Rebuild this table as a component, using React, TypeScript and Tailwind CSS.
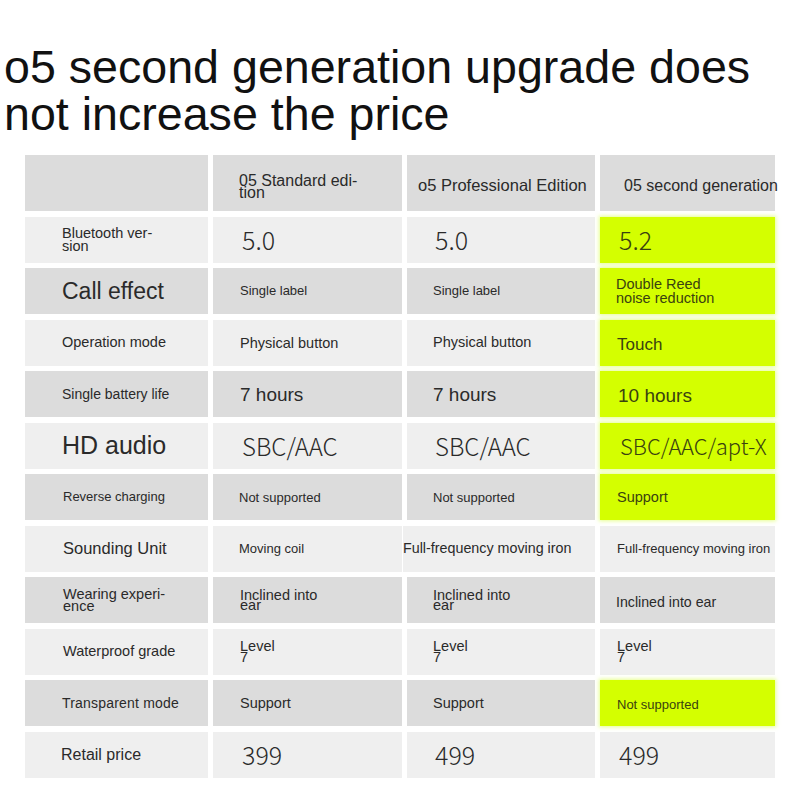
import React from "react";

type Tone = "d" | "l" | "g";

const tones: Record<Tone, string> = {
  d: "bg-[#dcdcdc] text-[#2a2a2a]",
  l: "bg-[#efefef] text-[#2a2a2a]",
  g: "bg-[#d4ff00] text-[#3a4210] shadow-[0_0_4px_1px_rgba(222,255,110,0.8)]",
};

const num = "[font-family:'Noto_Sans_CJK_SC','Noto_Sans',sans-serif] font-light";

const Cell = ({
  tone,
  className = "",
  children,
}: {
  tone: Tone;
  className?: string;
  children?: React.ReactNode;
}) => (
  <div className={`flex items-center whitespace-nowrap ${tones[tone]} ${className}`}>
    <div>{children}</div>
  </div>
);

const App = () => {
  return (
    <div className="w-[800px] h-[800px] bg-white overflow-hidden [font-family:'Liberation_Sans',Arial,sans-serif]">
      <h1 className="pt-[44px] pl-[4px] text-[46.6px] leading-[47px] font-normal text-[#111]">
        o5 second generation upgrade does
        <br />
        not increase the price
      </h1>

      <div className="mt-[17px] ml-[25px] grid grid-cols-[183px_189px_188px_175px] grid-rows-[56px_repeat(11,46px)] gap-x-[5px] gap-y-[5.5px]">
        {/* header */}
        <Cell tone="d" />
        <Cell tone="d" className="pl-[26px] text-[16px] leading-[12px] pt-[8px]">
          05 Standard edi-
          <br />
          tion
        </Cell>
        <Cell tone="d" className="pl-[11px] text-[16.5px] pt-[4px]">
          o5 Professional Edition
        </Cell>
        <Cell tone="d" className="pl-[24px] text-[16px] pt-[5px]">
          05 second generation
        </Cell>

        {/* Bluetooth */}
        <Cell tone="l" className="pl-[37px] text-[14.5px] leading-[12.5px]">
          Bluetooth ver-
          <br />
          sion
        </Cell>
        <Cell tone="l" className={`pl-[29px] text-[25px] ${num}`}>5.0</Cell>
        <Cell tone="l" className={`pl-[28px] text-[25px] ${num}`}>5.0</Cell>
        <Cell tone="g" className={`pl-[19px] text-[25px] ${num}`}>5.2</Cell>

        {/* Call effect */}
        <Cell tone="d" className="pl-[37px] text-[23px]">Call effect</Cell>
        <Cell tone="d" className="pl-[27px] text-[13px]">Single label</Cell>
        <Cell tone="d" className="pl-[26px] text-[13px]">Single label</Cell>
        <Cell tone="g" className="pl-[16px] text-[14.5px] leading-[14px]">
          Double Reed
          <br />
          noise reduction
        </Cell>

        {/* Operation mode */}
        <Cell tone="l" className="pl-[37px] text-[14.5px]">Operation mode</Cell>
        <Cell tone="l" className="pl-[27px] text-[14.5px] pt-[2px]">Physical button</Cell>
        <Cell tone="l" className="pl-[26px] text-[14.5px]">Physical button</Cell>
        <Cell tone="g" className="pl-[17px] text-[17px] pt-[4px]">Touch</Cell>

        {/* Battery */}
        <Cell tone="d" className="pl-[37px] text-[14px]">Single battery life</Cell>
        <Cell tone="d" className="pl-[27px] text-[19px] pt-[3px]">7 hours</Cell>
        <Cell tone="d" className="pl-[26px] text-[19px] pt-[3px]">7 hours</Cell>
        <Cell tone="g" className="pl-[18px] text-[19px] pt-[5px]">10 hours</Cell>

        {/* HD audio */}
        <Cell tone="l" className="pl-[37px] text-[25px]">HD audio</Cell>
        <Cell tone="l" className={`pl-[29px] text-[24px] ${num}`}>SBC/AAC</Cell>
        <Cell tone="l" className={`pl-[28px] text-[24px] ${num}`}>SBC/AAC</Cell>
        <Cell tone="g" className={`pl-[20px] text-[22px] ${num}`}>SBC/AAC/apt-X</Cell>

        {/* Reverse charging */}
        <Cell tone="d" className="pl-[38px] text-[13px]">Reverse charging</Cell>
        <Cell tone="d" className="pl-[26px] text-[13px] pt-[2px]">Not supported</Cell>
        <Cell tone="d" className="pl-[26px] text-[13px] pt-[2px]">Not supported</Cell>
        <Cell tone="g" className="pl-[17px] text-[14.5px] pt-[2px]">Support</Cell>

        {/* Sounding unit */}
        <Cell tone="l" className="pl-[38px] text-[16.5px]">Sounding Unit</Cell>
        <Cell tone="l" className="pl-[26px] text-[13px]">Moving coil</Cell>
        <Cell tone="l" className="-ml-[4px] pl-0 text-[14.3px]">Full-frequency moving iron</Cell>
        <Cell tone="l" className="pl-[17px] text-[13px]">Full-frequency moving iron</Cell>

        {/* Wearing */}
        <Cell tone="d" className="pl-[38px] text-[14.5px] leading-[12px]">
          Wearing experi-
          <br />
          ence
        </Cell>
        <Cell tone="d" className="pl-[27px] text-[14.5px] leading-[10px]">
          Inclined into
          <br />
          ear
        </Cell>
        <Cell tone="d" className="pl-[26px] text-[14.5px] leading-[10px]">
          Inclined into
          <br />
          ear
        </Cell>
        <Cell tone="d" className="pl-[16px] text-[14.2px] pt-[6px]">Inclined into ear</Cell>

        {/* Waterproof */}
        <Cell tone="l" className="pl-[38px] text-[14.5px]">Waterproof grade</Cell>
        <Cell tone="l" className="pl-[27px] text-[14.5px] leading-[11px]">
          Level
          <br />7
        </Cell>
        <Cell tone="l" className="pl-[26px] text-[14.5px] leading-[11px]">
          Level
          <br />7
        </Cell>
        <Cell tone="l" className="pl-[17px] text-[14.5px] leading-[11px]">
          Level
          <br />7
        </Cell>

        {/* Transparent */}
        <Cell tone="d" className="pl-[37px] text-[14px] tracking-[0.2px]">Transparent mode</Cell>
        <Cell tone="d" className="pl-[27px] text-[14.5px] pt-[2px]">Support</Cell>
        <Cell tone="d" className="pl-[26px] text-[14.5px] pt-[2px]">Support</Cell>
        <Cell tone="g" className="pl-[17px] text-[13px] pt-[3px]">Not supported</Cell>

        {/* Retail price */}
        <Cell tone="l" className="pl-[36px] text-[16px]">Retail price</Cell>
        <Cell tone="l" className={`pl-[29px] text-[25px] ${num}`}>399</Cell>
        <Cell tone="l" className={`pl-[28px] text-[25px] ${num}`}>499</Cell>
        <Cell tone="l" className={`pl-[19px] text-[25px] ${num}`}>499</Cell>
      </div>
    </div>
  );
};

export default App;
